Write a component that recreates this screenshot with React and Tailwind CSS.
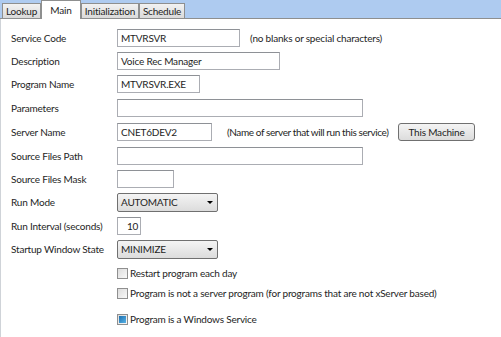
import { useState } from "react";

function Field({ width, value, className = "" }) {
  return (
    <div
      className={`h-[18px] shrink-0 border border-[#abadb3] border-t-[#8e9196] bg-white flex items-center px-[3px] ${className}`}
      style={{ width }}
    >
      {value}
    </div>
  );
}

function Select({ value }) {
  return (
    <div className="h-[19px] w-[101px] rounded-[2px] border border-[#707070] bg-gradient-to-b from-[#f4f4f4] to-[#dcdcdc] flex items-center justify-between pl-[3px] pr-[4px]">
      <span>{value}</span>
      <span className="w-0 h-0 border-l-[3px] border-r-[3px] border-t-[3px] border-l-transparent border-r-transparent border-t-black" />
    </div>
  );
}

function Check({ checked, label }) {
  return (
    <div className="flex items-center h-[11px]">
      <div className="w-[11px] h-[11px] border border-[#8f8f8f] bg-gradient-to-br from-[#dcdcdc] to-[#f8f8f8] flex items-center justify-center">
        {checked && (
          <div className="w-[7px] h-[7px] bg-gradient-to-br from-[#1b6fb0] to-[#58b3e6]" />
        )}
      </div>
      <span className="ml-[2px]">{label}</span>
    </div>
  );
}

function Row({ label, top, children }) {
  return (
    <div className="flex items-center h-[18px]" style={{ marginTop: top }}>
      <div className="w-[106px] shrink-0">{label}</div>
      {children}
    </div>
  );
}

export default function App() {
  const [tab, setTab] = useState("Main");
  const tabs = [
    { name: "Lookup", w: "w-[39px]" },
    { name: "Main", w: "w-[40px]" },
    { name: "Initialization", w: "w-[58px]" },
    { name: "Schedule", w: "w-[46px]" },
  ];

  return (
    <div className="w-[501px] h-[337px] bg-white overflow-hidden whitespace-nowrap text-[10px] tracking-[-0.2px] text-[#1e1e1e] font-['Lato',sans-serif]">
      <div className="flex items-end h-[19px] bg-[#aecbf0] border-b border-[#8e8f8f] pl-[2px]">
        {tabs.map((t) =>
          t.name === tab ? (
            <div
              key={t.name}
              onClick={() => setTab(t.name)}
              className={`${t.w} h-[19px] -mb-px bg-white border border-b-0 border-[#8e8f8f] flex justify-center pt-[2px]`}
            >
              {t.name}
            </div>
          ) : (
            <div
              key={t.name}
              onClick={() => setTab(t.name)}
              className={`${t.w} h-[15px] bg-gradient-to-b from-[#f2f2f2] to-[#dadada] border border-b-0 border-[#8e8f8f] flex items-center justify-center`}
            >
              {t.name}
            </div>
          )
        )}
      </div>

      <div className="h-full border-l border-[#cfd3d8] pl-[10px] pt-[10px]">
        <Row label="Service Code" top={0}>
          <Field width={123} value="MTVRSVR" />
          <span className="ml-[10px]">(no blanks or special characters)</span>
        </Row>
        <Row label="Description" top={5}>
          <Field width={163} value="Voice Rec Manager" />
        </Row>
        <Row label="Program Name" top={5}>
          <Field width={83} value="MTVRSVR.EXE" />
        </Row>
        <Row label="Parameters" top={6}>
          <Field width={246} value="" />
        </Row>
        <Row label="Server Name" top={6}>
          <Field width={95} value="CNET6DEV2" />
          <span className="ml-[15px] tracking-[-0.4px]">(Name of server that will run this service)</span>
          <button className="ml-auto mr-[26px] h-[18px] w-[77px] rounded-[3px] border border-[#707070] bg-gradient-to-b from-[#f4f4f4] to-[#dcdcdc]">
            This Machine
          </button>
        </Row>
        <Row label="Source Files Path" top={6}>
          <Field width={246} value="" />
        </Row>
        <Row label="Source Files Mask" top={5}>
          <Field width={57} value="" />
        </Row>
        <Row label="Run Mode" top={5}>
          <Select value="AUTOMATIC" />
        </Row>
        <Row label="Run Interval (seconds)" top={6}>
          <Field width={24} value="10" className="pl-[9px]" />
        </Row>
        <Row label="Startup Window State" top={5}>
          <Select value="MINIMIZE" />
        </Row>

        <div className="pl-[106px] flex flex-col">
          <div className="mt-[10px]">
            <Check label="Restart program each day" />
          </div>
          <div className="mt-[9px]">
            <Check label="Program is not a server program (for programs that are not xServer based)" />
          </div>
          <div className="mt-[15px]">
            <Check checked label="Program is a Windows Service" />
          </div>
        </div>
      </div>
    </div>
  );
}
